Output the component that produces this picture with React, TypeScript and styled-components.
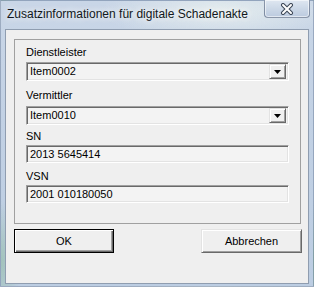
import React from "react";
import styled, { createGlobalStyle } from "styled-components";

const GlobalStyle = createGlobalStyle`
  html, body {
    margin: 0;
    padding: 0;
    width: 314px;
    height: 287px;
    overflow: hidden;
    font-family: "Liberation Sans", Arial, sans-serif;
  }
  * { box-sizing: border-box; }
`;

const Window = styled.div`
  width: 314px;
  height: 287px;
  display: flex;
  flex-direction: column;
  background:
    radial-gradient(ellipse 120px 30px at 220px 10px, rgba(235, 242, 240, 0.8), rgba(235, 242, 240, 0) 100%),
    radial-gradient(ellipse 20px 60px at 0px 260px, rgba(150, 190, 170, 0.7), rgba(150, 190, 170, 0) 100%),
    linear-gradient(to bottom, #c9d6e7 0%, #c2d1e4 40%, #bccde2 100%);
  border: 1px solid rgba(70, 90, 120, 0.35);
`;

const TitleBar = styled.div`
  height: 28px;
  display: flex;
  align-items: flex-start;
  justify-content: space-between;
  padding-left: 6px;
`;

const Title = styled.div`
  margin-top: 6px;
  font-family: "Liberation Sans", Arial, sans-serif;
  font-size: 12px;
  line-height: 15px;
  color: #111820;
  text-shadow: 0 0 6px rgba(255, 255, 255, 0.95), 0 0 10px rgba(255, 255, 255, 0.7);
  white-space: nowrap;
`;

const CloseButton = styled.div`
  width: 46px;
  height: 18px;
  margin-top: -1px;
  margin-right: 3px;
  display: flex;
  align-items: center;
  justify-content: center;
  border: 1px solid rgba(70, 85, 110, 0.55);
  border-top: none;
  border-radius: 0 0 4px 4px;
  background: linear-gradient(to bottom, #dfe7f1 0%, #ccd8e7 50%, #bccbdf 100%);
  box-shadow: inset 0 0 0 1px rgba(255, 255, 255, 0.55);
`;

const Body = styled.div`
  flex: 1;
  display: flex;
  padding: 0 4px 2px 4px;
`;

const Client = styled.div`
  flex: 1;
  display: flex;
  flex-direction: column;
  border: 1px solid #8f9db0;
  background: #efefef;
  padding: 9px 6px 0 8px;
`;

const Group = styled.div`
  width: 287px;
  height: 185px;
  border: 1px solid #a0a0a0;
  padding: 0 11px;
  display: flex;
  flex-direction: column;
`;

const Field = styled.div<{ $top: number }>`
  display: flex;
  flex-direction: column;
  margin-top: ${(p) => p.$top}px;
`;

const Label = styled.div<{ $gap: number }>`
  font-size: 11px;
  line-height: 13px;
  color: #000;
  margin-bottom: ${(p) => p.$gap}px;
`;

const Sunken = styled.div<{ $h: number }>`
  height: ${(p) => p.$h}px;
  display: flex;
  align-items: center;
  border-top: 1px solid #a0a0a0;
  border-left: 1px solid #a0a0a0;
  border-bottom: 1px solid #ffffff;
  border-right: 1px solid #ffffff;
  box-shadow: inset 1px 1px 0 #696969, inset -1px -1px 0 #e3e3e3;
  background: #f3f3f3;
  font-size: 11px;
  color: #000;
  padding: 0 2px 0 3px;
`;

const Value = styled.span`
  flex: 1;
  line-height: 13px;
`;

const DropButton = styled.div`
  width: 17px;
  height: 15px;
  margin-right: 0px;
  display: flex;
  align-items: center;
  justify-content: center;
  background: #f0f0f0;
  border-top: 1px solid #e3e3e3;
  border-left: 1px solid #e3e3e3;
  border-right: 1px solid #696969;
  border-bottom: 1px solid #696969;
  box-shadow: inset 1px 1px 0 #ffffff, inset -1px -1px 0 #a0a0a0;
`;

const ButtonRow = styled.div`
  display: flex;
  justify-content: space-between;
  margin-top: 5px;
  padding-right: 0;
`;

const Button = styled.div<{ $default?: boolean }>`
  width: ${(p) => (p.$default ? 100 : 101)}px;
  height: 24px;
  display: flex;
  align-items: center;
  justify-content: center;
  font-size: 11px;
  color: #000;
  background: #efefef;
  border: 1px solid ${(p) => (p.$default ? "#000" : "transparent")};
  box-shadow: ${(p) =>
    p.$default
      ? "inset 1px 1px 0 #ffffff, inset -1px -1px 0 #696969, inset -2px -2px 0 #a0a0a0"
      : "inset 1px 1px 0 #ffffff, inset -1px -1px 0 #a0a0a0"};
  ${(p) =>
    p.$default
      ? ""
      : "border-color: #e3e3e3 #696969 #696969 #e3e3e3;"}
`;

const Arrow = () => (
  <svg width="7" height="4" viewBox="0 0 7 4">
    <polygon points="0,0 7,0 3.5,4" fill="#000" />
  </svg>
);

const CloseGlyph = () => (
  <svg width="14" height="12" viewBox="0 0 14 12">
    <path d="M3 2 L11 10 M11 2 L3 10" stroke="#3c4656" strokeWidth="4" strokeLinecap="round" />
    <path d="M3 2 L11 10 M11 2 L3 10" stroke="#ffffff" strokeWidth="2" strokeLinecap="round" />
  </svg>
);

export default function App() {
  return (
    <>
      <GlobalStyle />
      <Window>
        <TitleBar>
          <Title>Zusatzinformationen für digitale Schadenakte</Title>
          <CloseButton>
            <CloseGlyph />
          </CloseButton>
        </TitleBar>
        <Body>
          <Client>
            <Group>
              <Field $top={6}>
                <Label $gap={3}>Dienstleister</Label>
                <Sunken $h={19}>
                  <Value>Item0002</Value>
                  <DropButton>
                    <Arrow />
                  </DropButton>
                </Sunken>
              </Field>
              <Field $top={8}>
                <Label $gap={4}>Vermittler</Label>
                <Sunken $h={19}>
                  <Value>Item0010</Value>
                  <DropButton>
                    <Arrow />
                  </DropButton>
                </Sunken>
              </Field>
              <Field $top={5}>
                <Label $gap={2}>SN</Label>
                <Sunken $h={18}>
                  <Value>2013 5645414</Value>
                </Sunken>
              </Field>
              <Field $top={7}>
                <Label $gap={2}>VSN</Label>
                <Sunken $h={18}>
                  <Value>2001 010180050</Value>
                </Sunken>
              </Field>
            </Group>
            <ButtonRow>
              <Button $default>OK</Button>
              <Button>Abbrechen</Button>
            </ButtonRow>
          </Client>
        </Body>
      </Window>
    </>
  );
}
